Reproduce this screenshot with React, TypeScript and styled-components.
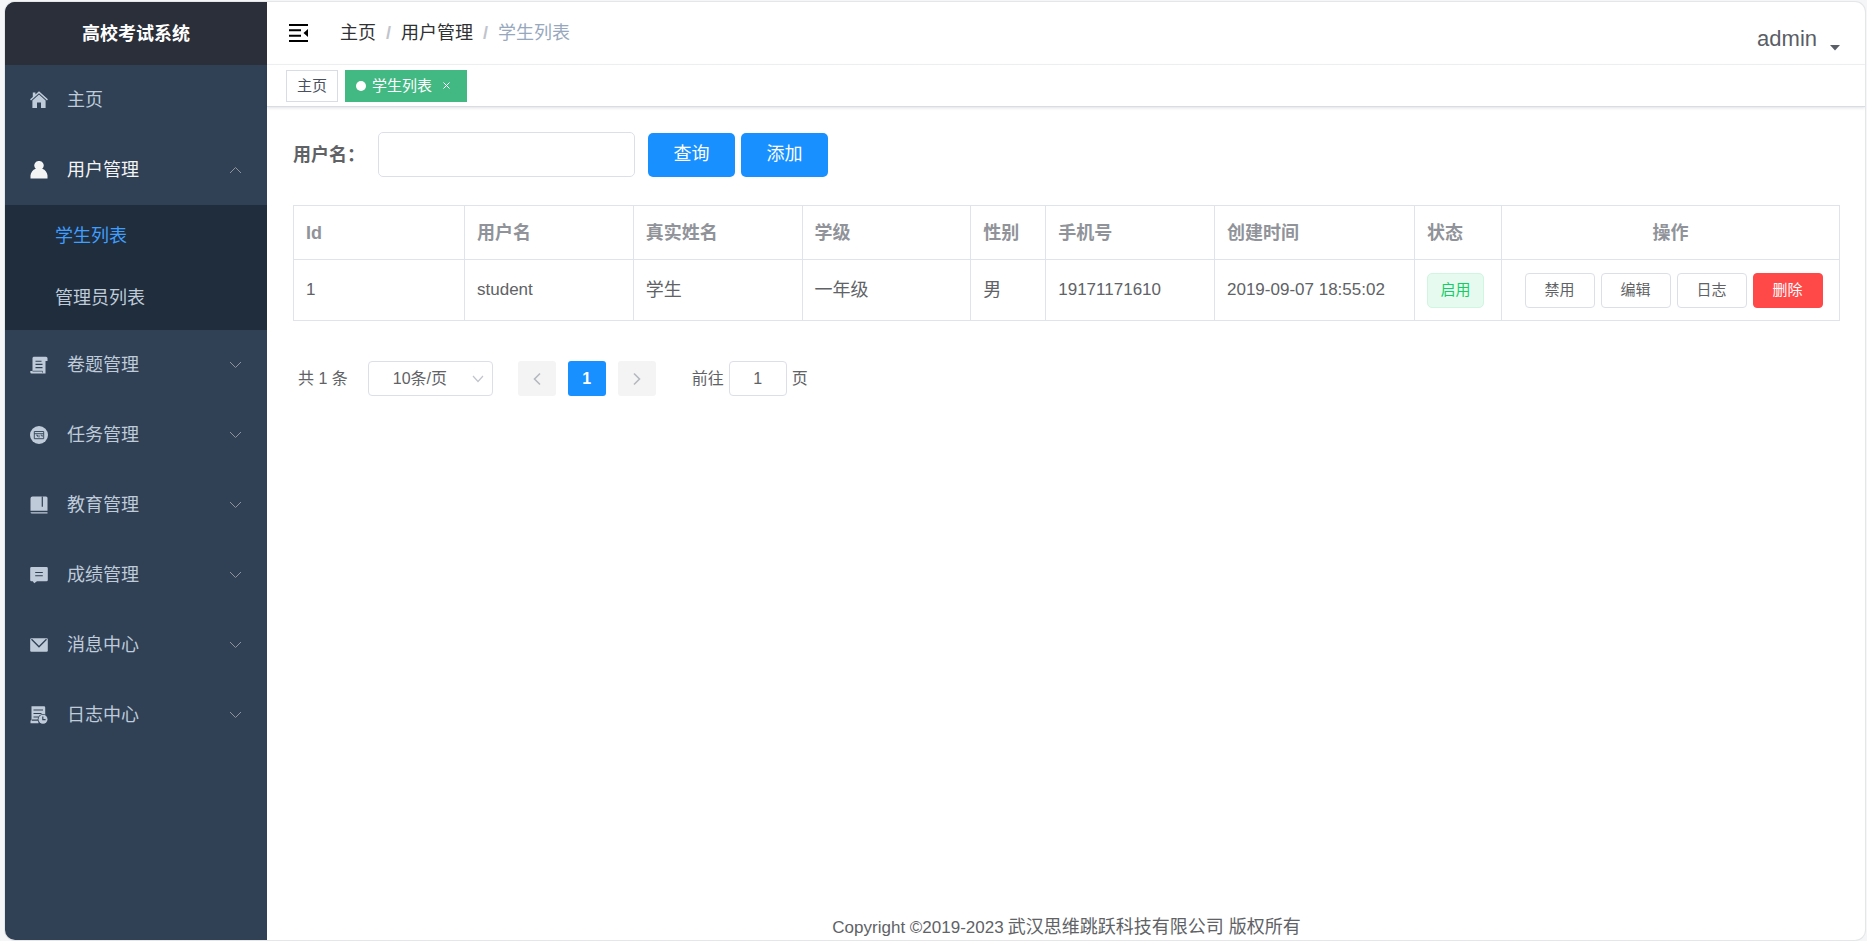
import React from "react";
import styled, { createGlobalStyle } from "styled-components";

const GlobalStyle = createGlobalStyle`
  * { box-sizing: border-box; }
  body {
    margin: 0;
    background: #f4f6f7;
    color: #606266;
    font-family: "Liberation Sans", "Noto Sans CJK SC", sans-serif;
    font-size: 18px;
    line-height: 24px;
  }
  button, input, select { font-family: inherit; line-height: inherit; }
`;

const Page = styled.div`
  display: flex;
  min-height: 100vh;
  padding: 2px 2px 1px 5px;
`;

const Shell = styled.div`
  display: flex;
  flex: 1;
  min-width: 0;
  overflow: hidden;
  background: #fff;
  border-radius: 10px;
  box-shadow: 0 0 0 1px #e4e6e8;
`;

const Sidebar = styled.aside`
  flex: none;
  width: 262px;
  background: #304156;
`;

const Brand = styled.h1`
  display: flex;
  align-items: center;
  justify-content: center;
  height: 63px;
  margin: 0;
  background: #2b2f3a;
  color: #fff;
  font-size: 18px;
  font-weight: 700;
`;

const MenuList = styled.ul`
  margin: 0;
  padding: 0;
  list-style: none;
`;

const MenuButton = styled.button<{ $open?: boolean }>`
  display: flex;
  align-items: center;
  gap: 19px;
  width: 100%;
  height: 70px;
  padding: 0 25px;
  border: 0;
  background: transparent;
  color: ${(p) => (p.$open ? "#f4f4f5" : "#bfcbd9")};
  font-size: 18px;
  text-align: left;
  cursor: pointer;
`;

const MenuText = styled.span`
  flex: 1;
`;

const SubMenu = styled(MenuList)`
  padding-bottom: 1px;
  background: #1f2d3d;
`;

const SubLink = styled.a<{ $active?: boolean }>`
  display: flex;
  align-items: center;
  height: 62px;
  padding-left: 50px;
  color: ${(p) => (p.$active ? "#409eff" : "#bfcbd9")};
  text-decoration: none;
`;

const Main = styled.div`
  display: flex;
  flex: 1;
  flex-direction: column;
  min-width: 0;
`;

const Navbar = styled.header`
  display: flex;
  align-items: center;
  height: 63px;
  padding: 0 25px 0 22px;
  border-bottom: 1px solid #f2f3f4;
`;

const IconButton = styled.button`
  display: flex;
  padding: 0;
  border: 0;
  background: none;
  color: #000;
  cursor: pointer;
`;

const Breadcrumb = styled.nav`
  display: flex;
  flex: 1;
  gap: 10px;
  margin-left: 32px;
`;

const Crumb = styled.a`
  color: #303133;
  text-decoration: none;
`;

const CurrentCrumb = styled.span`
  color: #97a8be;
`;

const Slash = styled.span`
  color: #c0c4cc;
  font-weight: 700;
`;

const UserButton = styled.button`
  display: flex;
  align-items: flex-end;
  gap: 13px;
  padding: 12px 0 0;
  border: 0;
  background: none;
  color: #5a5e66;
  font-size: 22px;
  cursor: pointer;
`;

const TagsBar = styled.div`
  display: flex;
  align-items: center;
  gap: 7px;
  height: 42px;
  padding: 0 19px;
  border-bottom: 1px solid #d8dce5;
  box-shadow: 0 1px 3px rgba(0, 0, 0, 0.12);
`;

const TagLink = styled.a<{ $active?: boolean }>`
  display: flex;
  align-items: center;
  height: 32px;
  padding: 0 ${(p) => (p.$active ? 16 : 10)}px 0 10px;
  border: 1px solid ${(p) => (p.$active ? "#42b983" : "#d8dce5")};
  background: ${(p) => (p.$active ? "#42b983" : "#fff")};
  color: ${(p) => (p.$active ? "#fff" : "#495060")};
  font-size: 15px;
  text-decoration: none;
`;

const Dot = styled.span`
  width: 10px;
  height: 10px;
  margin-right: 6px;
  border-radius: 50%;
  background: #fff;
`;

const CloseIcon = styled.svg`
  margin-left: 11px;
`;

const Content = styled.main`
  display: flex;
  flex: 1;
  flex-direction: column;
  padding: 25px 25px 0 26px;
`;

const SearchForm = styled.form`
  display: flex;
  align-items: center;
`;

const FieldLabel = styled.label`
  width: 85px;
  font-weight: 700;
`;

const SearchInput = styled.input`
  width: 257px;
  height: 45px;
  margin-right: 13px;
  padding: 0 18px;
  border: 1px solid #dcdfe6;
  border-radius: 5px;
  color: #606266;
  font-size: 18px;
`;

const PrimaryButton = styled.button`
  width: 87px;
  height: 44px;
  margin-right: 6px;
  padding: 0 0 2px;
  border: 0;
  border-radius: 5px;
  background: #1890ff;
  color: #fff;
  font-size: 18px;
  cursor: pointer;
`;

const Table = styled.table`
  width: 100%;
  margin-top: 28px;
  border-collapse: collapse;
  table-layout: fixed;
`;

const HeadCell = styled.th<{ $center?: boolean }>`
  height: 54px;
  padding: 0 12px;
  border: 1px solid #dfe3ea;
  color: #909399;
  font-weight: 700;
  text-align: ${(p) => (p.$center ? "center" : "left")};
`;

const Cell = styled.td<{ $latin?: boolean }>`
  height: 61px;
  padding: 0 12px;
  border: 1px solid #dfe3ea;
  font-size: ${(p) => (p.$latin ? 17 : 18)}px;
  white-space: nowrap;
`;

const StatusTag = styled.span`
  display: flex;
  align-items: center;
  justify-content: center;
  width: 57px;
  height: 35px;
  border: 1px solid #d0f5e0;
  border-radius: 5px;
  background: #e7faf0;
  color: #13ce66;
  font-size: 15px;
`;

const Actions = styled.div`
  display: flex;
  justify-content: center;
  gap: 6px;
  padding-left: 6px;
`;

const SmallButton = styled.button<{ $danger?: boolean }>`
  width: 70px;
  height: 35px;
  padding: 0;
  border: 1px solid ${(p) => (p.$danger ? "#ff4949" : "#dcdfe6")};
  border-radius: 4px;
  background: ${(p) => (p.$danger ? "#ff4949" : "#fff")};
  color: ${(p) => (p.$danger ? "#fff" : "#606266")};
  font-size: 15px;
  cursor: pointer;
`;

const Pagination = styled.div`
  display: flex;
  align-items: center;
  margin-top: 40px;
  padding-left: 5px;
  font-size: 16px;
`;

const SelectWrap = styled.div`
  display: flex;
  position: relative;
  margin: 0 25px 0 20px;
`;

const PageSize = styled.select`
  width: 125px;
  height: 35px;
  padding: 0 24px;
  border: 1px solid #dcdfe6;
  border-radius: 4px;
  appearance: none;
  background: #fff;
  color: #606266;
  font-size: 16px;
`;

const SelectArrow = styled.svg`
  position: absolute;
  top: 14px;
  right: 9px;
  pointer-events: none;
`;

const Pager = styled.nav`
  display: flex;
  gap: 12px;
  margin-right: 36px;
`;

const PagerButton = styled.button<{ $active?: boolean }>`
  display: flex;
  align-items: center;
  justify-content: center;
  width: 38px;
  height: 35px;
  padding: 0;
  border: 0;
  border-radius: 3px;
  background: ${(p) => (p.$active ? "#1890ff" : "#f4f4f5")};
  color: ${(p) => (p.$active ? "#fff" : "#b4b8bf")};
  font-size: 16px;
  font-weight: 700;
`;

const JumpLabel = styled.label`
  display: flex;
  align-items: center;
  gap: 5px;
`;

const JumpInput = styled.input`
  width: 58px;
  height: 35px;
  padding: 0;
  border: 1px solid #dcdfe6;
  border-radius: 4px;
  color: #606266;
  font-size: 16px;
  text-align: center;
`;

const Footer = styled.footer`
  display: flex;
  align-items: baseline;
  justify-content: center;
  gap: 4px;
  margin-top: auto;
`;

const Copyright = styled.span`
  font-size: 17px;
`;

const Chevron = ({ up = false }: { up?: boolean }) => (
  <svg width="13" height="8" viewBox="0 0 13 8" fill="none" stroke="#909399" strokeWidth="1">
    <path d={up ? "M1 7 6.500 1.500 12 7" : "M1 1 6.500 6.500 12 1"} />
  </svg>
);

const bg = "#304156";

const icons: Record<string, React.ReactNode> = {
  home: (
    <>
      <path d="M9 .2 17.900 8.300 17 9.500 9 2.300 1 9.500.1 8.300 2.800 5.900V1.500h2.600v2z" />
      <path d="M9 3.500 15.600 9.400V17H11V11.500H7V17H2.400V9.400z" />
    </>
  ),
  user: (
    <path d="M9 0a4.400 4.400 0 0 1 3.200 7.700C15.400 8.800 17.300 11.500 17.500 14.500V17.500H.5V14.500C.7 11.500 2.600 8.800 5.800 7.700A4.400 4.400 0 0 1 9 0z" />
  ),
  paper: (
    <>
      <path d="M3.500.8H16a1.500 1.500 0 0 1 1.500 1.500V5h-2V17.500H1.500A1.300 1.300 0 0 1 .3 16.200V15H2.500V1.800z" />
      <path d="M5.500 5.200h6M5.500 8.400h7M5.500 11.600h7" stroke={bg} strokeWidth="1.100" />
      <path d="M2.500 15.200h10v1.500" stroke={bg} strokeWidth=".7" fill="none" />
    </>
  ),
  task: (
    <>
      <circle cx="9" cy="9" r="9" />
      <path d="M4.300 5.500h9.400v7.200H4.300zM4.300 7.700h9.400" stroke={bg} strokeWidth=".9" fill="none" />
      <path d="M6.200 9.200h1.300v1.500M9 9.200v2.300M10.700 9.200h1.500v1.500" stroke={bg} strokeWidth=".9" fill="none" />
    </>
  ),
  book: (
    <>
      <path d="M2.500.5H16a1.500 1.500 0 0 1 1.500 1.500V14.800H.5V2.500a2 2 0 0 1 2-2z" />
      <path d="M.5 16.200H17.500V17.600H2A1.500 1.500 0 0 1 .5 16.200z" />
      <path d="M12.300.5v10.200" stroke={bg} strokeWidth="1.200" />
    </>
  ),
  message: (
    <>
      <path d="M1.500 1h15A1.300 1.300 0 0 1 17.800 2.300V14a1.300 1.300 0 0 1-1.300 1.300H7L4.200 17.300 2.800 15.300H1.500A1.300 1.300 0 0 1 .2 14V2.300A1.300 1.300 0 0 1 1.500 1z" />
      <path d="M5.200 6.500h7.600M5.200 9.700h7.600" stroke={bg} strokeWidth="1.100" />
    </>
  ),
  mail: (
    <>
      <rect x=".2" y="2.200" width="17.600" height="13.600" rx="1.200" />
      <path d="M1.500 3.200 9 10.800 16.500 3.200" stroke={bg} strokeWidth="1.300" fill="none" />
    </>
  ),
  log: (
    <>
      <path d="M1.500.3H14a1.200 1.200 0 0 1 1.200 1.200V9.500L8.500 13V17.300H.5V14.500H1.500z" />
      <path d="M3.500 4h9.500M3.500 7.500h8M3.500 11h5M2 14.200h6" stroke={bg} strokeWidth="1.200" />
      <circle cx="13" cy="13.200" r="5.300" fill={bg} />
      <circle cx="13" cy="13.200" r="4.500" />
      <path d="M12.800 10.500v3.200h2.800" stroke={bg} strokeWidth="1.200" fill="none" />
    </>
  ),
};

const MenuIcon = ({ name }: { name: string }) => (
  <svg width="18" height="18" viewBox="0 0 18 18" fill="currentColor" aria-hidden="true">
    {icons[name]}
  </svg>
);

const sections = [
  { icon: "paper", label: "卷题管理" },
  { icon: "task", label: "任务管理" },
  { icon: "book", label: "教育管理" },
  { icon: "message", label: "成绩管理" },
  { icon: "mail", label: "消息中心" },
  { icon: "log", label: "日志中心" },
];

const headings = ["Id", "用户名", "真实姓名", "学级", "性别", "手机号", "创建时间", "状态"];

export default function App() {
  return (
    <Page>
      <GlobalStyle />
      <Shell>
        <Sidebar>
          <Brand>高校考试系统</Brand>
          <MenuList>
            <li>
              <MenuButton>
                <MenuIcon name="home" />
                <MenuText>主页</MenuText>
              </MenuButton>
            </li>
            <li>
              <MenuButton $open aria-expanded="true">
                <MenuIcon name="user" />
                <MenuText>用户管理</MenuText>
                <Chevron up />
              </MenuButton>
              <SubMenu>
                <li><SubLink href="#students" $active>学生列表</SubLink></li>
                <li><SubLink href="#admins">管理员列表</SubLink></li>
              </SubMenu>
            </li>
            {sections.map((s) => (
              <li key={s.label}>
                <MenuButton aria-expanded="false">
                  <MenuIcon name={s.icon} />
                  <MenuText>{s.label}</MenuText>
                  <Chevron />
                </MenuButton>
              </li>
            ))}
          </MenuList>
        </Sidebar>
        <Main>
          <Navbar>
            <IconButton aria-label="折叠菜单">
              <svg width="19" height="18" viewBox="0 0 19 18" fill="currentColor">
                <path d="M0 0h19v2H0zM0 5.300h12v2H0zM0 10.700h12v2H0zM0 16h19v2H0zM19 5v8l-4.500-4z" />
              </svg>
            </IconButton>
            <Breadcrumb>
              <Crumb href="#home">主页</Crumb>
              <Slash>/</Slash>
              <Crumb href="#users">用户管理</Crumb>
              <Slash>/</Slash>
              <CurrentCrumb>学生列表</CurrentCrumb>
            </Breadcrumb>
            <UserButton>
              admin
              <svg width="10" height="6" viewBox="0 0 10 6" fill="currentColor">
                <path d="M0 0h10L5 5.500z" />
              </svg>
            </UserButton>
          </Navbar>
          <TagsBar>
            <TagLink href="#home">主页</TagLink>
            <TagLink href="#students" $active>
              <Dot />
              学生列表
              <CloseIcon width="7" height="7" viewBox="0 0 7 7" stroke="#fff" strokeWidth="1">
                <path d="M.5.5l6 6M6.500.5l-6 6" />
              </CloseIcon>
            </TagLink>
          </TagsBar>
          <Content>
            <SearchForm>
              <FieldLabel htmlFor="username">用户名：</FieldLabel>
              <SearchInput id="username" type="text" />
              <PrimaryButton type="button">查询</PrimaryButton>
              <PrimaryButton type="button">添加</PrimaryButton>
            </SearchForm>
            <Table>
              <colgroup>
                <col width="171" />
                <col />
                <col />
                <col />
                <col width="75" />
                <col />
                <col width="200" />
                <col width="87" />
                <col width="338" />
              </colgroup>
              <thead>
                <tr>
                  {headings.map((h) => (
                    <HeadCell key={h}>{h}</HeadCell>
                  ))}
                  <HeadCell $center>操作</HeadCell>
                </tr>
              </thead>
              <tbody>
                <tr>
                  <Cell $latin>1</Cell>
                  <Cell $latin>student</Cell>
                  <Cell>学生</Cell>
                  <Cell>一年级</Cell>
                  <Cell>男</Cell>
                  <Cell $latin>19171171610</Cell>
                  <Cell $latin>2019-09-07 18:55:02</Cell>
                  <Cell><StatusTag>启用</StatusTag></Cell>
                  <Cell>
                    <Actions>
                      <SmallButton>禁用</SmallButton>
                      <SmallButton>编辑</SmallButton>
                      <SmallButton>日志</SmallButton>
                      <SmallButton $danger>删除</SmallButton>
                    </Actions>
                  </Cell>
                </tr>
              </tbody>
            </Table>
            <Pagination>
              <span>共 1 条</span>
              <SelectWrap>
                <PageSize aria-label="每页条数">
                  <option>10条/页</option>
                </PageSize>
                <SelectArrow width="12" height="8" viewBox="0 0 12 8" fill="none" stroke="#c0c4cc" strokeWidth="1.200">
                  <path d="M1 1l5 5.500L11 1" />
                </SelectArrow>
              </SelectWrap>
              <Pager>
                <PagerButton disabled aria-label="上一页">
                  <svg width="8" height="14" viewBox="0 0 8 14" fill="none" stroke="currentColor" strokeWidth="1.600">
                    <path d="M7 1.500 1.500 7 7 12.500" />
                  </svg>
                </PagerButton>
                <PagerButton $active>1</PagerButton>
                <PagerButton disabled aria-label="下一页">
                  <svg width="8" height="14" viewBox="0 0 8 14" fill="none" stroke="currentColor" strokeWidth="1.600">
                    <path d="M1 1.500 6.500 7 1 12.500" />
                  </svg>
                </PagerButton>
              </Pager>
              <JumpLabel>
                前往
                <JumpInput type="text" defaultValue="1" />
                页
              </JumpLabel>
            </Pagination>
            <Footer>
              <Copyright>Copyright ©2019-2023</Copyright>
              <span>武汉思维跳跃科技有限公司 版权所有</span>
            </Footer>
          </Content>
        </Main>
      </Shell>
    </Page>
  );
}
